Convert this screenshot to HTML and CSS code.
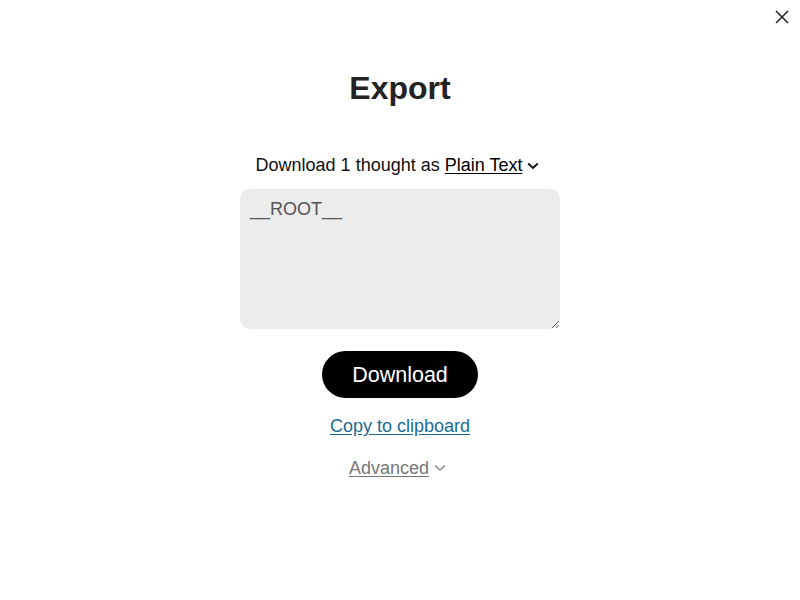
FILE: index.html
```html
<!DOCTYPE html>
<html>
<head>
<meta charset="utf-8">
<link rel="stylesheet" href="styles.css">
</head>
<body>
<button class="close" aria-label="Close">
  <svg width="14" height="14" viewBox="0 0 14 14"><path d="M1 1 L13 13 M13 1 L1 13" stroke="#222" stroke-width="1.5" fill="none"/></svg>
</button>
<main class="panel">
  <h1 class="title">Export</h1>
  <div class="format">Download 1 thought as <span class="format-select">Plain Text</span>
    <svg class="chev chev-dark" width="12" height="8" viewBox="0 0 12 8"><path d="M1.2 1.5 L6 6 L10.8 1.5" stroke="#111" stroke-width="2" fill="none"/></svg>
  </div>
  <textarea class="preview" readonly>__ROOT__</textarea>
  <button class="download">Download</button>
  <a class="copy" href="#">Copy to clipboard</a>
  <div class="advanced"><span class="adv-link">Advanced</span>
    <svg class="chev chev-light" width="12" height="8" viewBox="0 0 12 8"><path d="M1 1.5 L6 6 L11 1.5" stroke="#888" stroke-width="1.5" fill="none"/></svg>
  </div>
</main>
</body>
</html>
```
FILE: styles.css
```css
html, body {
  margin: 0;
  padding: 0;
  background: #fff;
  font-family: "Liberation Sans", Arial, sans-serif;
  color: #222;
}
.close {
  position: absolute;
  top: 10px;
  right: 11px;
  width: 14px;
  height: 14px;
  padding: 0;
  border: 0;
  background: none;
  display: flex;
}
.panel {
  display: flex;
  flex-direction: column;
  align-items: center;
  padding-top: 70px;
}
.title {
  margin: 0;
  font-size: 32px;
  line-height: 37px;
  font-weight: bold;
  color: #222;
}
.format {
  margin-top: 46px;
  padding-right: 5px;
  font-size: 18px;
  line-height: 24px;
  color: #111;
  display: flex;
  align-items: center;
}
.format-select {
  margin-left: 5px;
  text-decoration: underline;
  text-underline-offset: 2px;
  color: #000;
}
.chev { margin-left: 5px; }
.chev-dark { margin-top: 2px; }
.chev-light { margin-top: 0; }
.preview {
  margin-top: 12px;
  width: 320px;
  height: 140px;
  box-sizing: border-box;
  border: 0;
  border-radius: 10px;
  background: #ececec;
  padding: 10px;
  font-family: "Liberation Sans", Arial, sans-serif;
  font-size: 18px;
  line-height: 21px;
  color: #555;
  resize: vertical;
  outline: none;
  display: block;
}
.download {
  margin-top: 22px;
  width: 156px;
  height: 47px;
  padding: 2px 0 0;
  border: 0;
  border-radius: 24px;
  background: #000;
  color: #fff;
  font-family: "Liberation Sans", Arial, sans-serif;
  font-size: 21.5px;
}
.copy {
  margin-top: 16px;
  font-size: 18px;
  line-height: 24px;
  color: #1b6b96;
  text-decoration: underline;
  text-underline-offset: 2px;
}
.advanced {
  margin-top: 18px;
  padding-right: 5px;
  font-size: 18px;
  line-height: 24px;
  color: #777;
  display: flex;
  align-items: center;
}
.adv-link {
  text-decoration: underline;
  text-underline-offset: 2px;
}
```
